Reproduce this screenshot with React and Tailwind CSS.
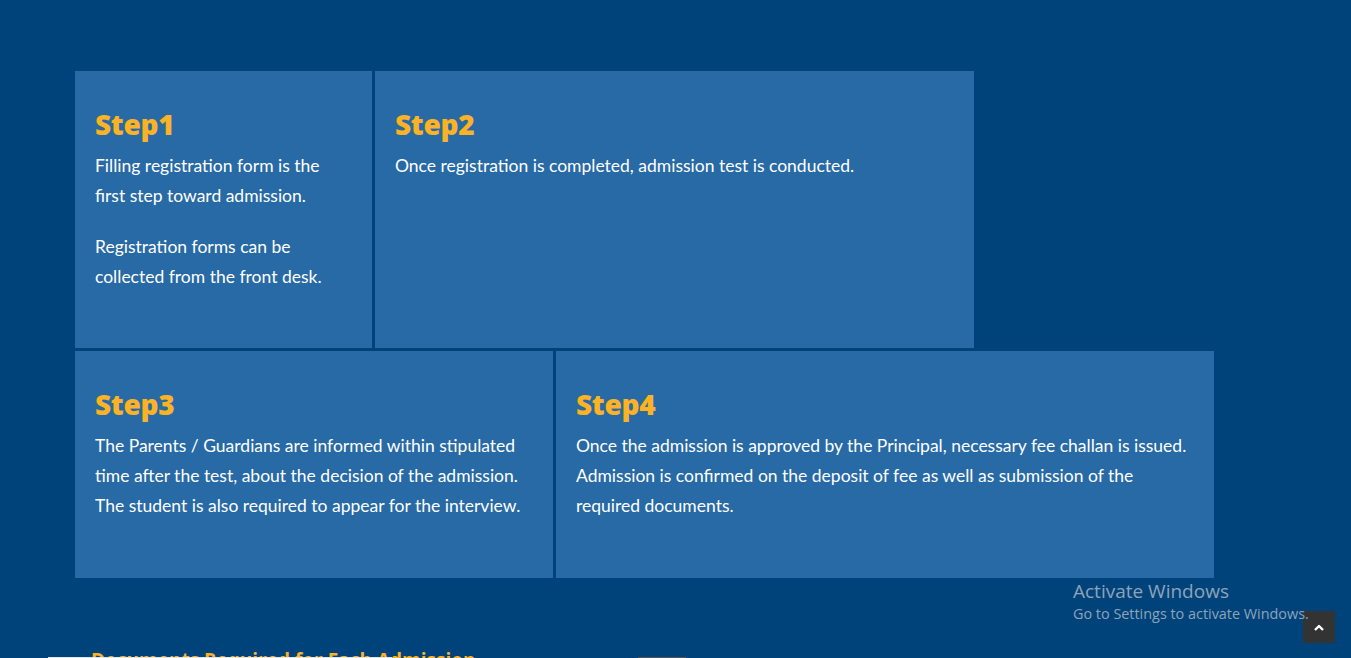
import React from 'react'

/* Admission steps — four blue cards on a navy band */

const steps = [
  {
    title: 'Step1',
    width: 'w-[297px]',
    body: [
      'Filling registration form is the first step toward admission.',
      'Registration forms can be collected from the front desk.',
    ],
  },
  {
    title: 'Step2',
    width: 'w-[599px]',
    body: ['Once registration is completed, admission test is conducted.'],
  },
  {
    title: 'Step3',
    width: 'w-[478px]',
    body: [
      'The Parents / Guardians are informed within stipulated time after the test, about the decision of the admission. The student is also required to appear for the interview.',
    ],
  },
  {
    title: 'Step4',
    width: 'w-[658px]',
    body: [
      'Once the admission is approved by the Principal, necessary fee challan is issued. Admission is confirmed on the deposit of fee as well as submission of the required documents.',
    ],
  },
]

function StepCard({ step, height }) {
  return (
    <div className={`${step.width} ${height} bg-[#276aa6] pl-[20px] pr-[24px] pt-[36px]`}>
      <h3 className="font-['Open_Sans',sans-serif] text-[28px] leading-[34px] font-extrabold tracking-[-0.3px] text-[#fbb224] mb-[10px]">
        {step.title}
      </h3>
      {step.body.map((p, i) => (
        <p key={i} className="font-['Lato',sans-serif] text-[17.5px] leading-[30px] text-white mb-[21px] last:mb-0">
          {p}
        </p>
      ))}
    </div>
  )
}

export default function App() {
  return (
    <div className="relative w-[1351px] h-[658px] overflow-hidden bg-[#00437a]">
      <div className="pt-[71px] pl-[75px] flex flex-col gap-[3px]">
        <div className="flex gap-[3px]">
          <StepCard step={steps[0]} height="h-[277px]" />
          <StepCard step={steps[1]} height="h-[277px]" />
        </div>
        <div className="flex gap-[3px]">
          <StepCard step={steps[2]} height="h-[227px]" />
          <StepCard step={steps[3]} height="h-[227px]" />
        </div>
      </div>

      {/* next section, cut off at the bottom edge */}
      <div className="mt-[70px] pl-[91px]">
        <h2 className="font-['Open_Sans',sans-serif] text-[19px] leading-[24px] font-bold text-[#fbb224]">
          Documents Required for Each Admission
        </h2>
      </div>
      <div className="absolute left-[48px] bottom-0 w-[344px] h-[1px] bg-[#dfe6ee]" />
      <div className="absolute left-[638px] bottom-0 w-[48px] h-[1px] bg-[#555]" />

      {/* scroll to top */}
      <button className="absolute left-[1303px] top-[611px] w-[32px] h-[32px] bg-[#333333] flex items-center justify-center">
        <svg width="10" height="7" viewBox="0 0 10 7">
          <path d="M1 6 L5 2 L9 6" stroke="white" strokeWidth="2.4" fill="none" strokeLinejoin="round" />
        </svg>
      </button>

      {/* windows watermark, drawn over everything */}
      <div className="absolute left-[1073px] top-[579px] z-10 font-['Open_Sans',sans-serif] text-[#8ea3b9] pointer-events-none">
        <div className="text-[19px] leading-[24px]">Activate Windows</div>
        <div className="text-[14.4px] leading-[20px] mt-[1px]">Go to Settings to activate Windows.</div>
      </div>
    </div>
  )
}
